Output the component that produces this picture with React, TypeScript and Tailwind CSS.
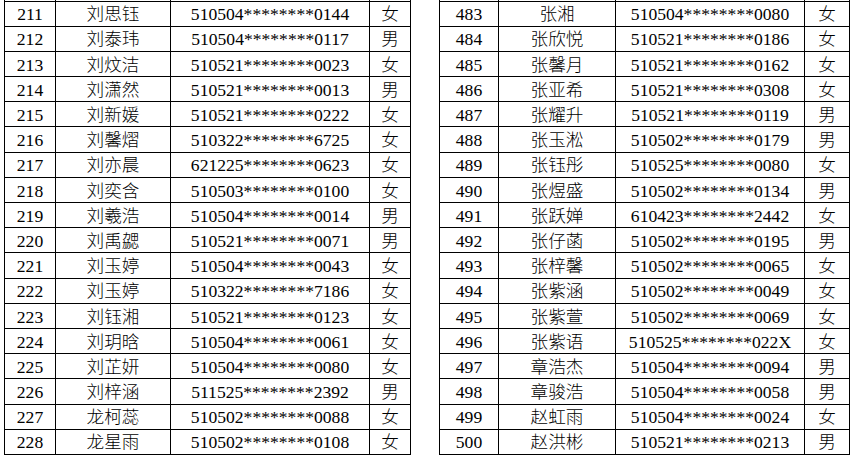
import React from 'react';

type Row = [string, string, string, string];

const left: Row[] = [
  ['211', '刘思钰', '510504********0144', '女'],
  ['212', '刘泰玮', '510504********0117', '男'],
  ['213', '刘炆洁', '510521********0023', '女'],
  ['214', '刘潇然', '510521********0013', '男'],
  ['215', '刘新媛', '510521********0222', '女'],
  ['216', '刘馨熠', '510322********6725', '女'],
  ['217', '刘亦晨', '621225********0623', '女'],
  ['218', '刘奕含', '510503********0100', '女'],
  ['219', '刘羲浩', '510504********0014', '男'],
  ['220', '刘禹勰', '510521********0071', '男'],
  ['221', '刘玉婷', '510504********0043', '女'],
  ['222', '刘玉婷', '510322********7186', '女'],
  ['223', '刘钰湘', '510521********0123', '女'],
  ['224', '刘玥晗', '510504********0061', '女'],
  ['225', '刘芷妍', '510504********0080', '女'],
  ['226', '刘梓涵', '511525********2392', '男'],
  ['227', '龙柯蕊', '510502********0088', '女'],
  ['228', '龙星雨', '510502********0108', '女'],
];

const right: Row[] = [
  ['483', '张湘', '510504********0080', '女'],
  ['484', '张欣悦', '510521********0186', '女'],
  ['485', '张馨月', '510521********0162', '女'],
  ['486', '张亚希', '510521********0308', '女'],
  ['487', '张耀升', '510521********0119', '男'],
  ['488', '张玉淞', '510502********0179', '男'],
  ['489', '张钰彤', '510525********0080', '女'],
  ['490', '张煜盛', '510502********0134', '男'],
  ['491', '张跃婵', '610423********2442', '女'],
  ['492', '张仔菡', '510502********0195', '男'],
  ['493', '张梓馨', '510502********0065', '女'],
  ['494', '张紫涵', '510502********0049', '女'],
  ['495', '张紫萱', '510502********0069', '女'],
  ['496', '张紫语', '510525********022X', '女'],
  ['497', '章浩杰', '510504********0094', '男'],
  ['498', '章骏浩', '510504********0058', '男'],
  ['499', '赵虹雨', '510504********0024', '女'],
  ['500', '赵洪彬', '510521********0213', '男'],
];

// column widths for each half, in px
const RosterTable: React.FC<{ rows: Row[]; widths: number[] }> = ({ rows, widths }) => (
  <table
    className="table-fixed border-collapse text-black text-[17.6px] leading-none font-light"
    style={{ width: widths.reduce((a, b) => a + b, 0) }}
  >
    <colgroup>
      {widths.map((w, i) => (
        <col key={i} style={{ width: w }} />
      ))}
    </colgroup>
    <tbody>
      {/* stub of the row above, cut off by the page edge */}
      <tr className="h-px">
        {widths.map((_, i) => (
          <td key={i} className="border-x border-black p-0" />
        ))}
      </tr>
      {rows.map((r) => (
        <tr key={r[0]} className="h-[25.2px]">
          {r.map((cell, i) => (
            <td key={i} className="border border-black p-0 pt-[3px] text-center align-middle whitespace-nowrap">
              {cell}
            </td>
          ))}
        </tr>
      ))}
    </tbody>
  </table>
);

export default function App() {
  return (
    <div
      className="w-[852px] h-[459px] bg-white overflow-hidden flex items-start pl-1"
      style={{ fontFamily: '"Liberation Serif", "Noto Sans CJK SC", serif' }}
    >
      <RosterTable rows={left} widths={[51, 115, 199, 41]} />
      <div className="w-[28px] shrink-0" />
      <RosterTable rows={right} widths={[59, 117, 189, 45]} />
    </div>
  );
}
